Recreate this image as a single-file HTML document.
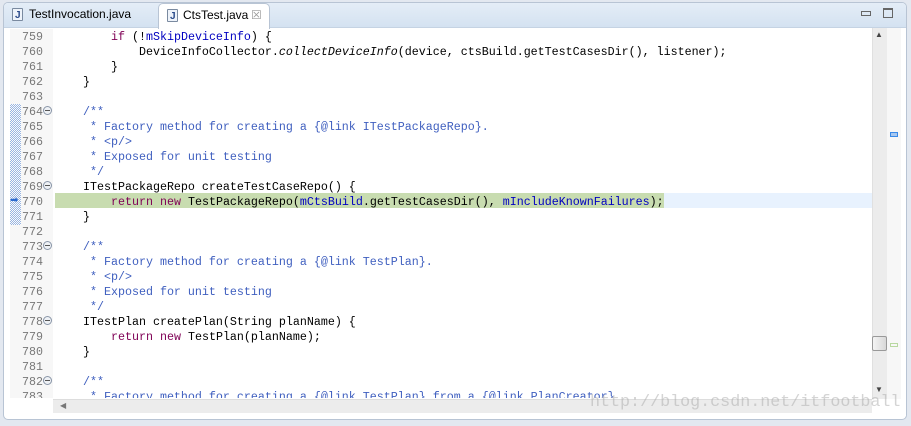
<!DOCTYPE html>
<html><head><meta charset="utf-8"><style>
*{margin:0;padding:0;box-sizing:border-box}
body{width:911px;height:426px;background:#e3e8f0;position:relative;overflow:hidden;font-family:"Liberation Sans",sans-serif}
.frame{position:absolute;left:3px;top:2px;width:904px;height:418px;background:#fff;border:1px solid #b8c4d4;border-radius:5px}
.tabbar{position:absolute;left:4px;top:3px;width:902px;height:25px;background:linear-gradient(#e4edf7,#d4e2f1);border-radius:4px 4px 0 0;border-bottom:1px solid #c5d3e3}
.tab{position:absolute;top:3px;height:25px;font-size:12px;color:#000;line-height:22px;padding-left:24px}
.tab .ic{position:absolute;left:8px;top:5px;width:11px;height:13px;border:1px solid #7a8aa0;background:#eef3fa;border-radius:1px}
.tab .ic:after{content:"J";position:absolute;left:2px;top:-4px;font-size:10px;color:#2a4a8a;font-weight:bold}
.tab2{background:#fff;border:1px solid #b8c4d4;border-bottom:none;border-radius:5px 5px 0 0}
.gutter{position:absolute;left:10px;top:29px;width:43px;height:371px;background:#f7f7f7}
.code{position:absolute;left:0;top:30px;font-family:"Liberation Mono",monospace;font-size:11.67px;line-height:15px;white-space:pre;color:#000}
.ln{position:absolute;left:22px;color:#787878}
.tx{position:absolute;left:83px}
.k{color:#7f0055}
.f{color:#0000c0}
.d{color:#3f5fbf}
.i{font-style:italic}
.fold{position:absolute;left:43px;width:9px;height:9px;border:1px solid #8a96a8;border-radius:50%;background:#eef1f5}
.fold:after{content:"";position:absolute;left:1px;top:3px;width:5px;height:1px;background:#555}
</style></head><body>
<div class="frame"></div>
<div class="tabbar"></div>
<div class="tab" style="left:4px;width:154px;padding-left:25px">TestInvocation.java<span class="ic"></span></div>
<div class="tab tab2" style="left:158px;width:112px;height:26px">CtsTest.java<span class="ic"></span><span style="position:absolute;left:92px;top:0;color:#999;font-size:12px">☒</span></div>
<div style="position:absolute;left:861px;top:11px;width:10px;height:5px;border:1px solid #666"></div>
<div style="position:absolute;left:883px;top:8px;width:10px;height:10px;border:1px solid #666;border-top-width:2px"></div>
<div class="gutter"></div>
<div style="position:absolute;left:10px;top:104px;width:11px;height:121px;background-image:repeating-conic-gradient(#4a7fd0 0 25%,#fff 0 50%);background-size:2px 2px;opacity:.55"></div>
<div style="position:absolute;left:55px;top:193px;width:609px;height:15px;background:#c8dcb0"></div>
<div style="position:absolute;left:664px;top:193px;width:208px;height:15px;background:#e8f2fe"></div>
<div style="position:absolute;left:10px;top:195px;font-size:10px;color:#2a6ad0">➡</div>
<div class="code">
<div class="ln" style="top:0">759</div><div class="tx" style="top:0">    <span class="k">if</span> (!<span class="f">mSkipDeviceInfo</span>) {</div>
<div class="ln" style="top:15px">760</div><div class="tx" style="top:15px">        DeviceInfoCollector.<span class="i">collectDeviceInfo</span>(device, ctsBuild.getTestCasesDir(), listener);</div>
<div class="ln" style="top:30px">761</div><div class="tx" style="top:30px">    }</div>
<div class="ln" style="top:45px">762</div><div class="tx" style="top:45px">}</div>
<div class="ln" style="top:60px">763</div>
<div class="ln" style="top:75px">764</div><div class="tx d" style="top:75px">/**</div>
<div class="ln" style="top:90px">765</div><div class="tx d" style="top:90px"> * Factory method for creating a {@link ITestPackageRepo}.</div>
<div class="ln" style="top:105px">766</div><div class="tx d" style="top:105px"> * &lt;p/&gt;</div>
<div class="ln" style="top:120px">767</div><div class="tx d" style="top:120px"> * Exposed for unit testing</div>
<div class="ln" style="top:135px">768</div><div class="tx d" style="top:135px"> */</div>
<div class="ln" style="top:150px">769</div><div class="tx" style="top:150px">ITestPackageRepo createTestCaseRepo() {</div>
<div class="ln" style="top:165px">770</div><div class="tx" style="top:165px">    <span class="k">return</span> <span class="k">new</span> TestPackageRepo(<span class="f">mCtsBuild</span>.getTestCasesDir(), <span class="f">mIncludeKnownFailures</span>);</div>
<div class="ln" style="top:180px">771</div><div class="tx" style="top:180px">}</div>
<div class="ln" style="top:195px">772</div>
<div class="ln" style="top:210px">773</div><div class="tx d" style="top:210px">/**</div>
<div class="ln" style="top:225px">774</div><div class="tx d" style="top:225px"> * Factory method for creating a {@link TestPlan}.</div>
<div class="ln" style="top:240px">775</div><div class="tx d" style="top:240px"> * &lt;p/&gt;</div>
<div class="ln" style="top:255px">776</div><div class="tx d" style="top:255px"> * Exposed for unit testing</div>
<div class="ln" style="top:270px">777</div><div class="tx d" style="top:270px"> */</div>
<div class="ln" style="top:285px">778</div><div class="tx" style="top:285px">ITestPlan createPlan(String planName) {</div>
<div class="ln" style="top:300px">779</div><div class="tx" style="top:300px">    <span class="k">return</span> <span class="k">new</span> TestPlan(planName);</div>
<div class="ln" style="top:315px">780</div><div class="tx" style="top:315px">}</div>
<div class="ln" style="top:330px">781</div>
<div class="ln" style="top:345px">782</div><div class="tx d" style="top:345px">/**</div>
<div class="ln" style="top:360px">783</div><div class="tx d" style="top:360px"> * Factory method for creating a {@link TestPlan} from a {@link PlanCreator}.</div>
</div>
<div class="fold" style="top:106px"></div>
<div class="fold" style="top:181px"></div>
<div class="fold" style="top:241px"></div>
<div class="fold" style="top:316px"></div>
<div class="fold" style="top:376px"></div>
<div style="position:absolute;left:10px;top:398px;width:896px;height:18px;background:#fff"></div>
<div style="position:absolute;left:53px;top:399px;width:819px;height:14px;background:#ececec;border-top:1px solid #ddd"></div>
<div style="position:absolute;left:60px;top:401px;font-size:8px;color:#777">◀</div>
<div style="position:absolute;left:872px;top:28px;width:15px;height:371px;background:#ececec;border-left:1px solid #e0e0e0"></div>
<div style="position:absolute;left:875px;top:30px;font-size:8px;color:#444">▲</div>
<div style="position:absolute;left:875px;top:385px;font-size:8px;color:#444">▼</div>
<div style="position:absolute;left:872px;top:336px;width:15px;height:15px;background:linear-gradient(90deg,#f4f4f4,#d8d8d8);border:1px solid #999;border-radius:2px"></div>
<div style="position:absolute;left:887px;top:28px;width:14px;height:371px;background:#f7f7f7"></div>
<div style="position:absolute;left:890px;top:132px;width:8px;height:5px;background:#a8c8f0;border:1px solid #3a8ae8"></div>
<div style="position:absolute;left:890px;top:343px;width:8px;height:4px;border:1px solid #b8d8a0"></div>
<div style="position:absolute;left:590px;top:393px;font-family:'Liberation Mono',monospace;font-size:16.7px;color:rgba(170,170,170,.5)">http://blog.csdn.net/itfootball</div>
</body></html>
